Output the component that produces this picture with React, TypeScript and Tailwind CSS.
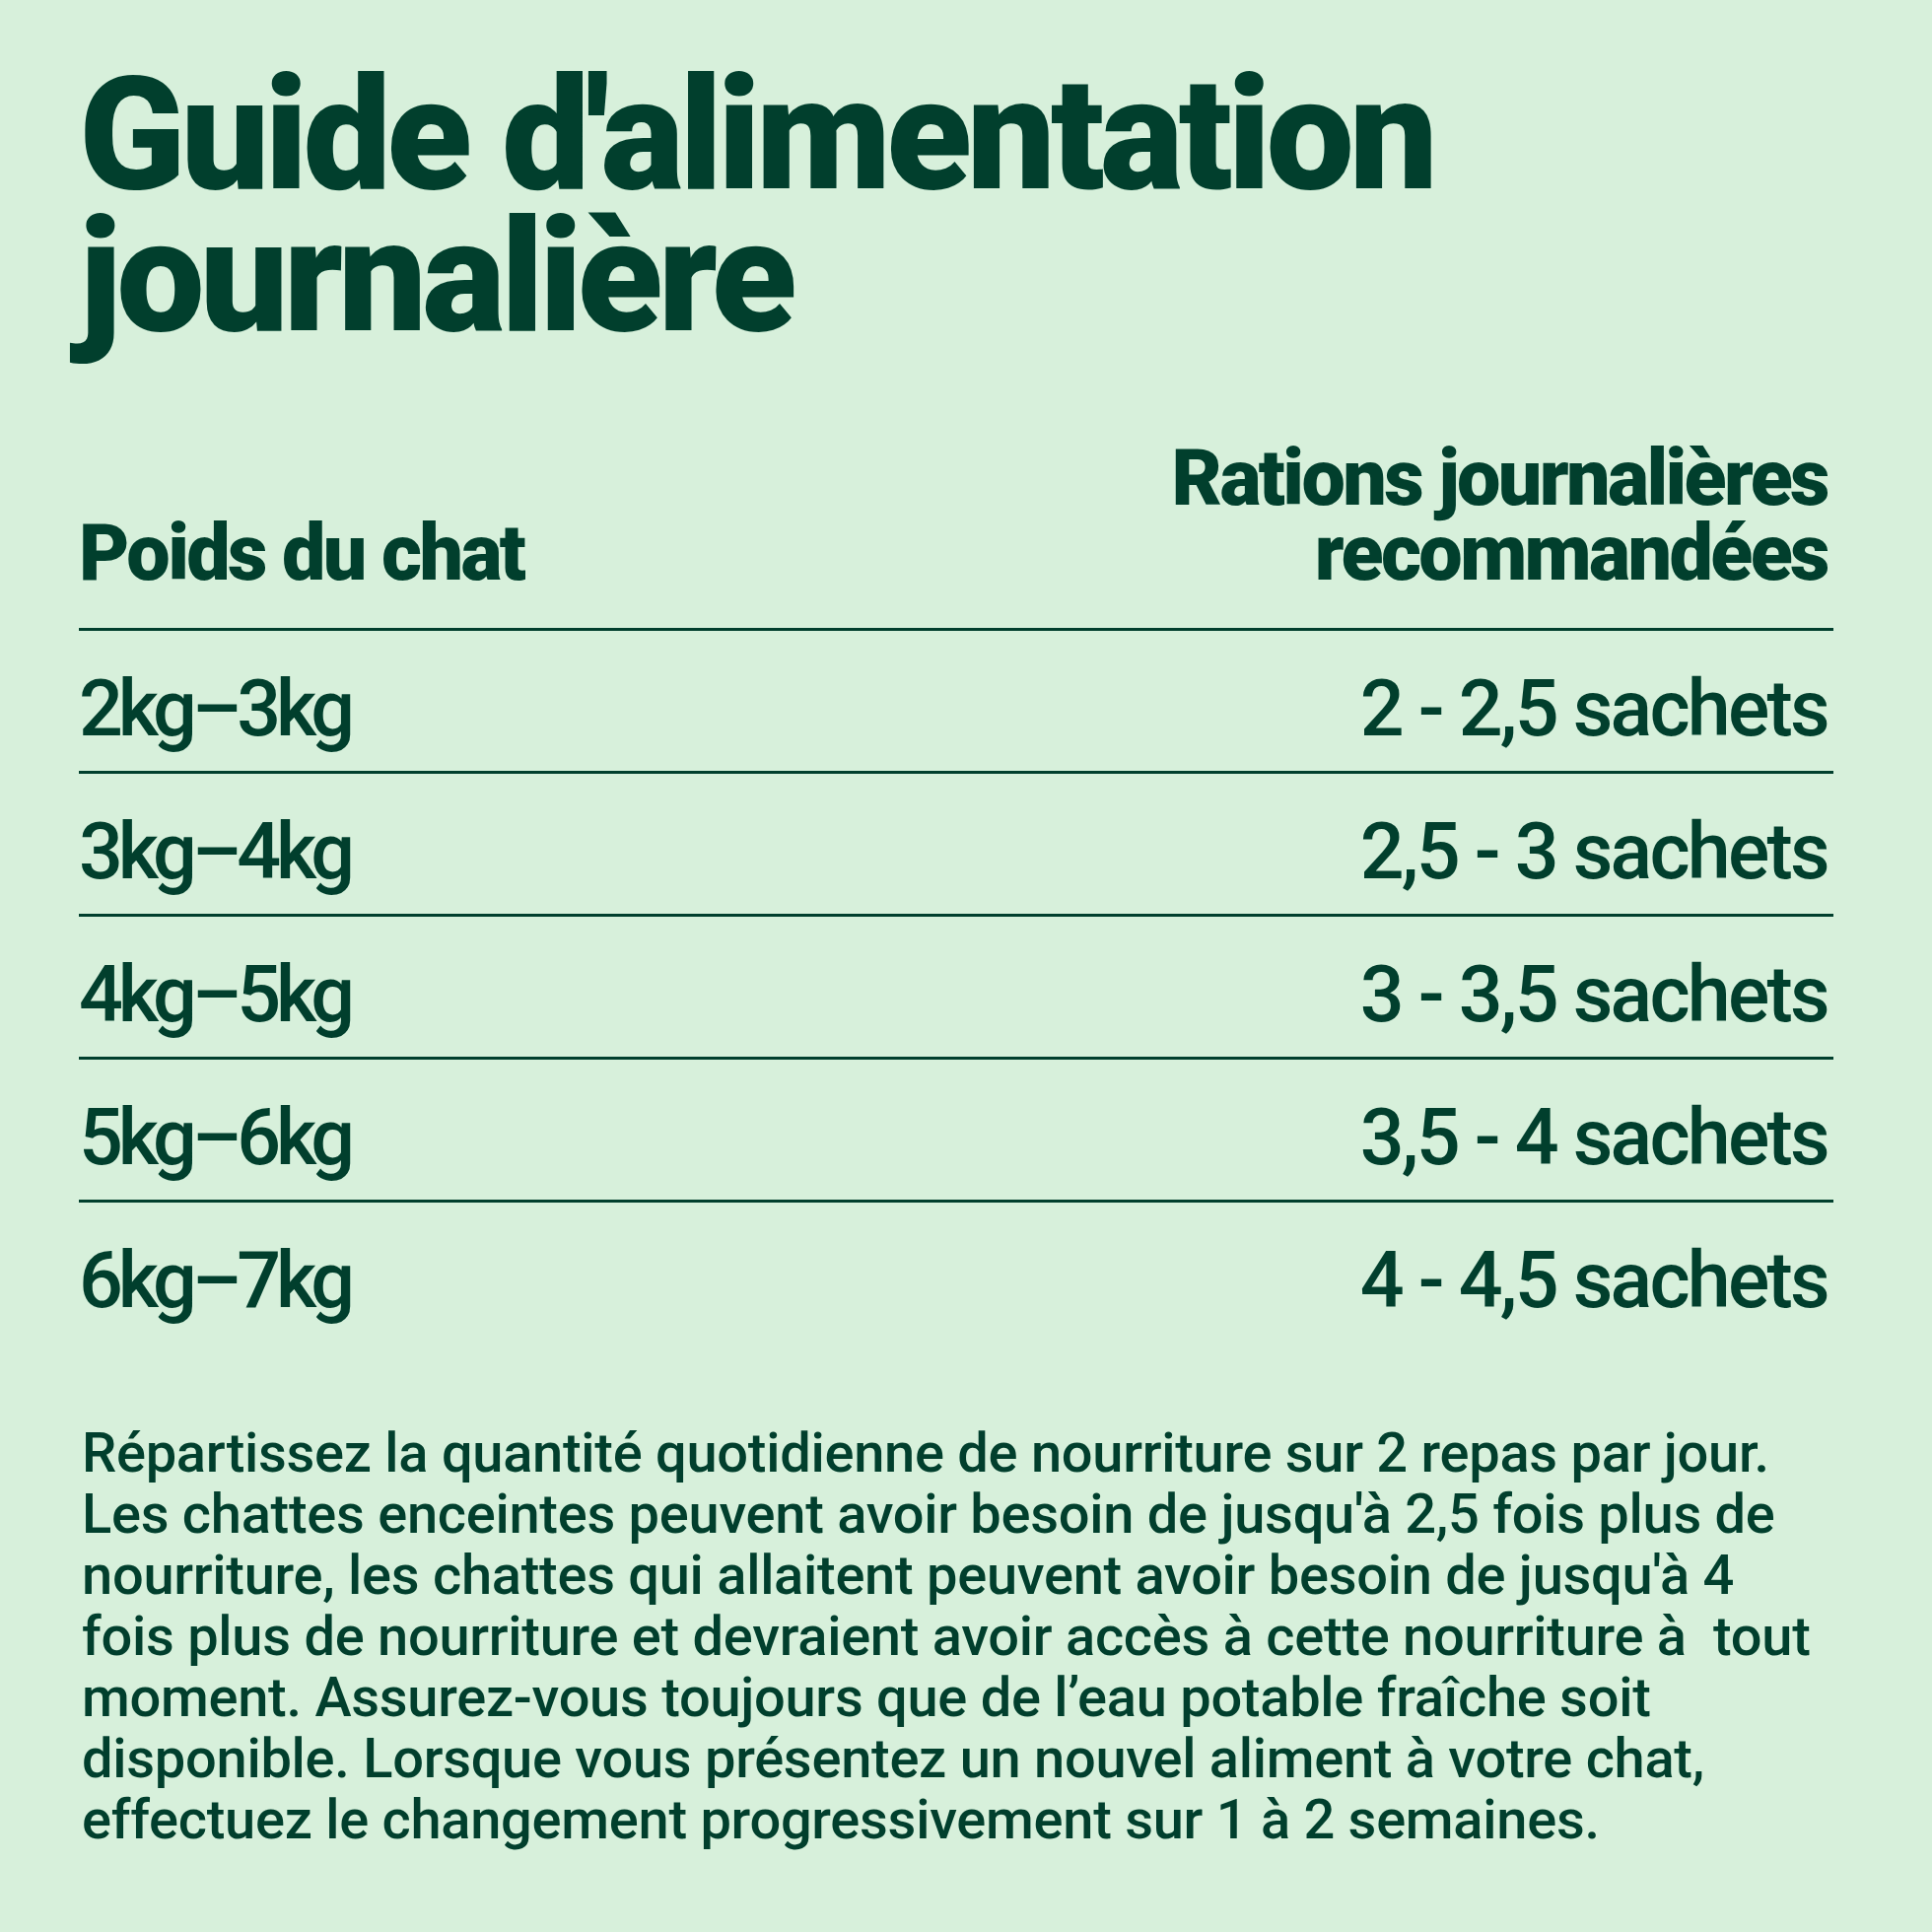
const rows = [
  { weight: "2kg–3kg", ration: "2 - 2,5 sachets" },
  { weight: "3kg–4kg", ration: "2,5 - 3 sachets" },
  { weight: "4kg–5kg", ration: "3 - 3,5 sachets" },
  { weight: "5kg–6kg", ration: "3,5 - 4 sachets" },
  { weight: "6kg–7kg", ration: "4 - 4,5 sachets" },
];

const notes = [
  "Répartissez la quantité quotidienne de nourriture sur 2 repas par jour.",
  "Les chattes enceintes peuvent avoir besoin de jusqu'à 2,5 fois plus de",
  "nourriture, les chattes qui allaitent peuvent avoir besoin de jusqu'à 4",
  "fois plus de nourriture et devraient avoir accès à cette nourriture à  tout",
  "moment. Assurez-vous toujours que de l’eau potable fraîche soit",
  "disponible. Lorsque vous présentez un nouvel aliment à votre chat,",
  "effectuez le changement progressivement sur 1 à 2 semaines.",
];

export default function App() {
  return (
    <div className="min-h-screen bg-[#d7f0db] pl-[80px] pr-[100px] pt-[65px] text-[#013f2d] [font-family:Roboto,'Noto_Sans',sans-serif]">
      <h1 className="text-[159px] leading-[144px] font-black tracking-[-0.03em]">
        Guide d'alimentation
        <br />
        journalière
      </h1>

      <div className="mt-[94px] flex items-end justify-between pb-[38px] text-[79px] leading-[76px] font-black tracking-[-0.033em]">
        <div>Poids du chat</div>
        <div className="pr-[6px] text-right">
          Rations journalières
          <br />
          recommandées
        </div>
      </div>

      <div>
        {rows.map((row) => (
          <div
            key={row.weight}
            className="flex justify-between border-t-[3px] border-[#013f2d] pt-[40px] pb-[23px] text-[79px] leading-[79px] font-medium"
          >
            <span className="tracking-[-0.065em]">{row.weight}</span>
            <span className="pr-[6px] tracking-[-0.035em]">{row.ration}</span>
          </div>
        ))}
      </div>

      <p className="mt-[81px] ml-[3px] text-[56px] leading-[62px] font-medium tracking-[-0.005em]">
        {notes.map((line) => (
          <span key={line} className="block whitespace-pre">
            {line}
          </span>
        ))}
      </p>
    </div>
  );
}
